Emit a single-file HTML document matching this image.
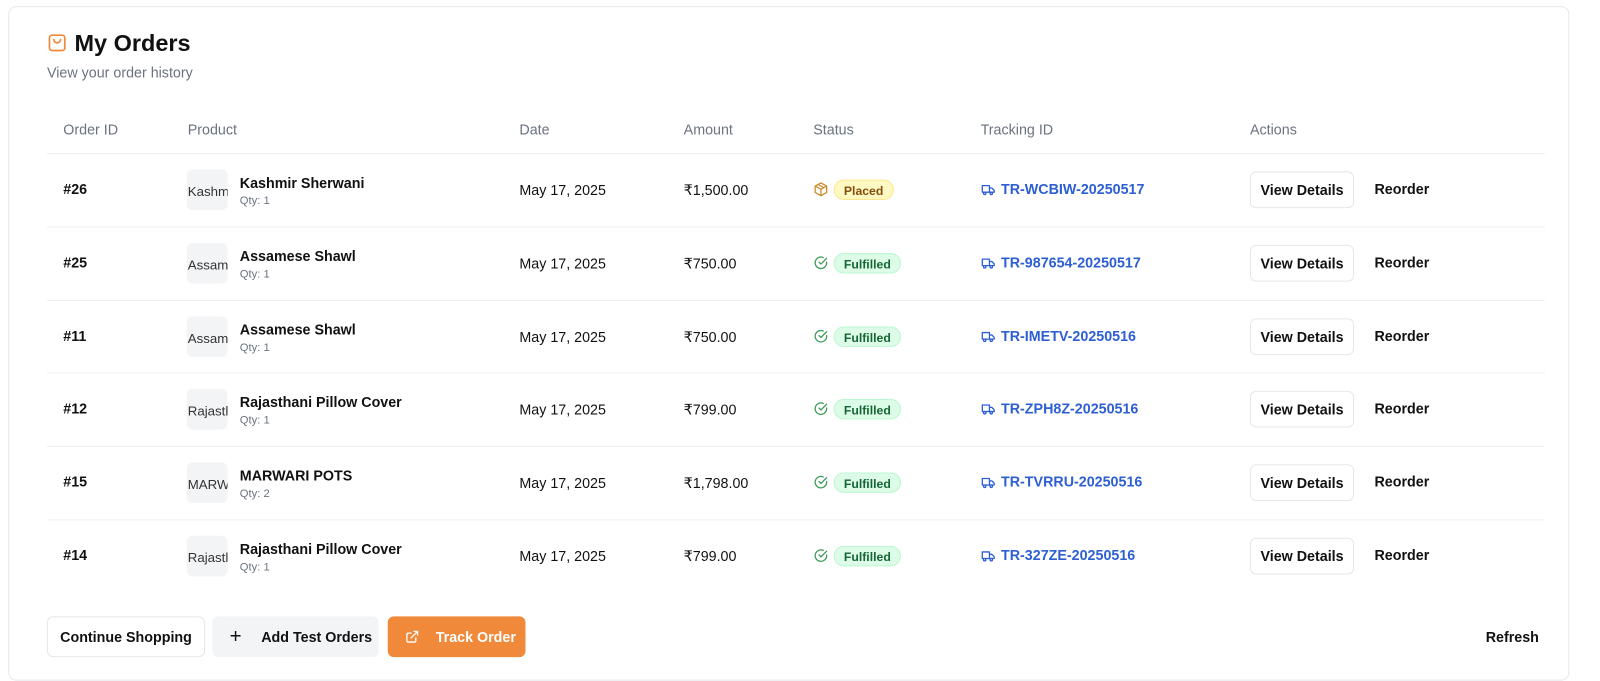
<!DOCTYPE html>
<html style="width:1600px;height:681px;overflow:hidden"><head><meta charset="utf-8"><style>
*{box-sizing:border-box;margin:0;padding:0}
html,body{width:1600px;height:681px;overflow:hidden;background:#fff}
body{font-family:"Liberation Sans",sans-serif;color:#111}
#o{position:relative;width:1600px;height:681px;overflow:hidden}
#w{position:absolute;left:0;top:0;width:1568px;height:668px;transform:scale(1.0204);transform-origin:0 0}
.card{position:absolute;left:8px;top:6px;width:1530px;height:661px;border:1px solid #e5e7eb;border-radius:8px}
.a{position:absolute;white-space:nowrap}
.h{font-size:14px;color:#6b7280;top:119px}
.line{position:absolute;left:46px;width:1468px;height:1px;background:#eeeff1}
.id{font-size:14px;font-weight:bold}
.img{position:absolute;width:40px;height:40px;background:#f3f4f6;border-radius:6px;overflow:hidden;font-size:13px;color:#333;padding:14px 0 0 1px}
.pn{font-size:14px;font-weight:bold;color:#111}
.q{font-size:11px;color:#6b7280}
.t{font-size:14px;color:#111}
.badge{position:absolute;height:20px;border-radius:10px;font-size:12px;font-weight:bold;padding:3px 9px 0}
.pl{background:#fef9c3;color:#854d0e;border:1px solid #fde68a}
.fu{background:#dcfce7;color:#166534;border:1px solid #bbf7d0}
.tr{font-size:14px;font-weight:bold;color:#2d5fd3}
.vd{position:absolute;width:102px;height:36px;border:1px solid #e5e7eb;border-radius:6px;font-size:14px;font-weight:bold;text-align:center;line-height:34px}
.ro{font-size:14px;font-weight:bold}
.btn{position:absolute;top:604px;height:40px;border-radius:6px;font-size:14px;font-weight:bold;line-height:40px}
</style></head><body><div id="o"><div id="w">
<div class="card"></div>
<svg class="a" style="left:46px;top:32px" width="20" height="20" viewBox="0 0 24 24" fill="none" stroke="#f0893a" stroke-width="2" stroke-linecap="round" stroke-linejoin="round"><rect x="3" y="3" width="18" height="18" rx="3"/><path d="M8 8a4 4 0 0 0 8 0"/></svg>
<div class="a" style="left:73px;top:29px;font-size:23px;font-weight:bold">My Orders</div>
<div class="a" style="left:46px;top:63px;font-size:14px;color:#6b7280">View your order history</div>
<div class="a h" style="left:62px">Order ID</div>
<div class="a h" style="left:184px">Product</div>
<div class="a h" style="left:509px">Date</div>
<div class="a h" style="left:670px">Amount</div>
<div class="a h" style="left:797px">Status</div>
<div class="a h" style="left:961px">Tracking ID</div>
<div class="a h" style="left:1225px">Actions</div>
<div id="rows"></div>
<div class="btn" style="left:46px;width:155px;border:1px solid #e5e7eb;text-align:center;line-height:38px">Continue Shopping</div>
<div class="btn" style="left:208px;width:163px;background:#f3f4f6"><span style="position:absolute;left:17px;font-size:20px;font-weight:normal">+</span><span style="position:absolute;left:48px">Add Test Orders</span></div>
<div class="btn" style="left:380px;width:135px;background:#f0893a;color:#fff"><svg style="position:absolute;left:17px;top:13px" width="14" height="14" viewBox="0 0 24 24" fill="none" stroke="#fff" stroke-width="2.2" stroke-linecap="round"><path d="M18 14v5a2 2 0 0 1-2 2H5a2 2 0 0 1-2-2V8a2 2 0 0 1 2-2h5M15 3h6v6M10 14L21 3"/></svg><span style="position:absolute;left:47px">Track Order</span></div>
<div class="a" style="left:1456px;top:616px;font-size:14px;font-weight:bold">Refresh</div>
</div></div>
<script>
var d=[["#26","Kashmir Sherwani","Kashm","Qty: 1","₹1,500.00","TR-WCBIW-20250517",0],
["#25","Assamese Shawl","Assam","Qty: 1","₹750.00","TR-987654-20250517",1],
["#11","Assamese Shawl","Assam","Qty: 1","₹750.00","TR-IMETV-20250516",1],
["#12","Rajasthani Pillow Cover","Rajasth","Qty: 1","₹799.00","TR-ZPH8Z-20250516",1],
["#15","MARWARI POTS","MARW","Qty: 2","₹1,798.00","TR-TVRRU-20250516",1],
["#14","Rajasthani Pillow Cover","Rajasth","Qty: 1","₹799.00","TR-327ZE-20250516",1]];
var h="";
d.forEach(function(r,i){var c=Math.round(186+i*71.8);var top=c-36;
h+='<div class="line" style="top:'+top+'px"></div>';
h+='<div class="a id" style="left:62px;top:'+(c-9)+'px">'+r[0]+'</div>';
h+='<div class="img" style="left:183px;top:'+(c-20)+'px">'+r[2]+'</div>';
h+='<div class="a pn" style="left:235px;top:'+(c-15)+'px">'+r[1]+'</div>';
h+='<div class="a q" style="left:235px;top:'+(c+5)+'px">'+r[3]+'</div>';
h+='<div class="a t" style="left:509px;top:'+(c-8)+'px">May 17, 2025</div>';
h+='<div class="a t" style="left:670px;top:'+(c-8)+'px">'+r[4]+'</div>';
if(r[6]==0){h+='<svg class="a" style="left:797px;top:'+(c-8)+'px" width="15" height="15" viewBox="0 0 24 24" fill="none" stroke="#c98a2a" stroke-width="2" stroke-linejoin="round"><path d="M12 2l9 5v10l-9 5-9-5V7z"/><path d="M3 7l9 5 9-5M12 12v10M7.5 4.5l9 5"/></svg><div class="badge pl" style="left:817px;top:'+(c-10)+'px">Placed</div>';}
else{h+='<svg class="a" style="left:797px;top:'+(c-8)+'px" width="15" height="15" viewBox="0 0 24 24" fill="none" stroke="#3a9a55" stroke-width="2" stroke-linecap="round"><path d="M21 11v1a9 9 0 1 1-5.3-8.2"/><path d="M9 11l3 3 9-9"/></svg><div class="badge fu" style="left:817px;top:'+(c-10)+'px">Fulfilled</div>';}
h+='<svg class="a" style="left:961px;top:'+(c-7)+'px" width="15" height="14" viewBox="0 0 24 24" fill="none" stroke="#2d5fd3" stroke-width="2.2" stroke-linejoin="round"><path d="M2 5h12v11H2zM14 9h4l4 4v3h-8z"/><circle cx="6" cy="18" r="2" fill="#fff"/><circle cx="17" cy="18" r="2" fill="#fff"/></svg>';
h+='<div class="a tr" style="left:981px;top:'+(c-9)+'px">'+r[5]+'</div>';
h+='<div class="vd" style="left:1225px;top:'+(c-18)+'px">View Details</div>';
h+='<div class="a ro" style="left:1347px;top:'+(c-9)+'px">Reorder</div>';});
document.getElementById("rows").innerHTML=h;
</script>
</body></html>
